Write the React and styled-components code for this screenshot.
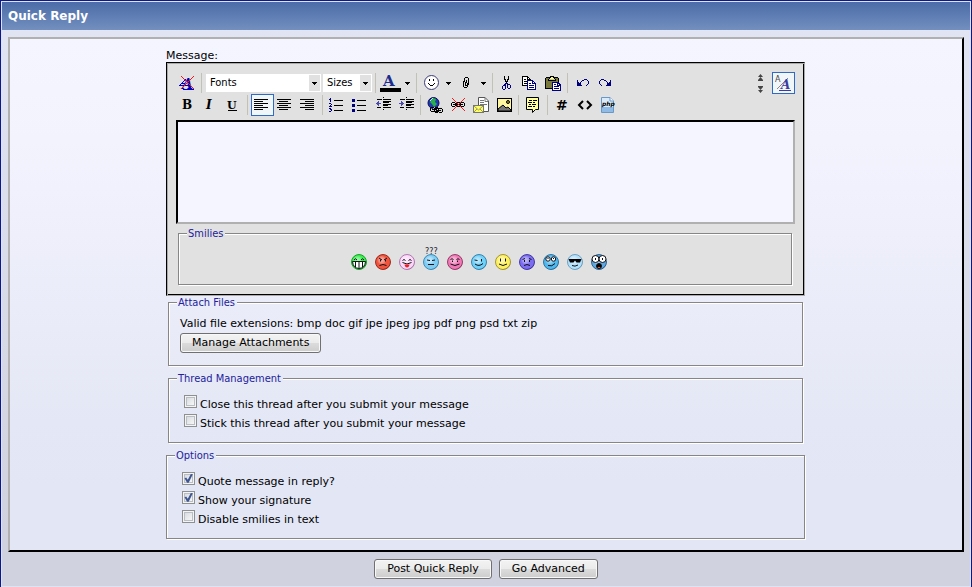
import React from "react";
import styled, { createGlobalStyle, css } from "styled-components";

const Global = createGlobalStyle`
  * { box-sizing: border-box; }
  body {
    margin: 0;
    font: 11px/14px Verdana, "DejaVu Sans", sans-serif;
    color: #000;
    background: #e1e4f2;
  }
`;

const Frame = styled.form`
  display: flex;
  flex-direction: column;
  min-height: 100vh;
  padding: 1px;
  border: 1px solid #0b198c;
  background: #dfe2f0;
`;
const Header = styled.h1`
  margin: 0;
  padding: 0 6px;
  font-size: 12px;
  line-height: 28px;
  font-weight: bold;
  color: #fff;
  background: linear-gradient(#4b6ca8, #738fbf);
`;
const Body = styled.main`
  flex: 1;
  padding: 7px 6px 0;
  background: linear-gradient(#e1e4f2, #d0d2e0 90%);
`;
const Panel = styled.div`
  padding: 10px;
  border: 2px solid;
  border-color: #b0b0b0 #000 #000 #b0b0b0;
  background: linear-gradient(#f5f5ff, #f3f3fe 20%, #e4e7f5 75%, #e2e6f5);
`;
const Column = styled.div`
  max-width: 640px;
  margin: 0 auto;
  display: flex;
  flex-direction: column;
`;
const MessageLabel = styled.label`
  line-height: 13px;
`;
const Editor = styled.section`
  margin-right: 1px;
  padding: 9px;
  background: #e1e1e1;
  border: 1px solid;
  border-color: #000 #aaa #aaa #000;
  box-shadow: inset 1px 1px #aaa, inset -1px -1px #000;
`;
const Toolbar = styled.div`
  display: flex;
  align-items: center;
  height: 22px;
`;
const Spacer = styled.span`
  flex: 1;
`;
const Separator = styled.span`
  width: 6px;
  height: 20px;
  display: flex;
  justify-content: center;
  &::before {
    content: "";
    width: 2px;
    border-left: 1px solid #c1c1b5;
  }
`;
const Tool = styled.button`
  display: flex;
  align-items: center;
  width: ${(p) => (p.$menu ? 35 : 23)}px;
  height: 22px;
  padding: 0 ${(p) => (p.$menu ? 0 : 3)}px;
  border: 1px solid transparent;
  background: none;
  ${(p) =>
    p.$active &&
    css`
      border-color: #316ac5;
      background: #f1f6f8;
    `}
`;
const Icon = styled.svg.attrs({ "aria-hidden": true })`
  flex: none;
  display: block;
  overflow: visible;
`;
const Picker = styled.span`
  display: grid;
  grid-template-columns: 1fr 12px;
  width: ${(p) => (p.$wide ? 115 : 49)}px;
  height: 18px;
  margin: 0 1px;
  border: 1px solid #fff;
  background: linear-gradient(#e1e1e1, #e1e1e1) right / 11px 100% no-repeat #fff;
`;
const Choice = styled.select`
  grid-area: 1 / 1 / 2 / 3;
  width: 100%;
  min-width: 0;
  padding: 0 3px;
  border: 0;
  appearance: none;
  background: none;
  font: 11px/16px Tahoma, "DejaVu Sans Condensed", "DejaVu Sans", sans-serif;
  color: #000;
`;
const PickerArrow = styled(Icon)`
  grid-area: 1 / 2;
  align-self: center;
  justify-self: center;
  pointer-events: none;
`;
const Resizer = styled.div`
  display: flex;
  flex-direction: column;
  gap: 5px;
  margin-right: 8px;
`;
const ResizeButton = styled.button`
  display: flex;
  padding: 0;
  border: 0;
  background: none;
`;
const Message = styled.textarea`
  display: block;
  width: 100%;
  height: 104px;
  margin: 4px 0 3px;
  padding: 4px;
  resize: none;
  border: 2px solid;
  border-color: #000 #b0b0b0 #b0b0b0 #000;
  background: #f5f5ff;
  font: inherit;
`;
const grooveLine = `url("data:image/svg+xml,${encodeURIComponent(
  '<svg xmlns="http://www.w3.org/2000/svg" width="7" height="7" shape-rendering="crispEdges" fill="none">' +
    '<rect x="1.5" y="1.5" width="5" height="5" stroke="#fff"/>' +
    '<rect x=".5" y=".5" width="5" height="5" stroke="#868686"/></svg>'
)}")`;
const Group = styled.fieldset`
  min-width: 0;
  margin: 0 ${(p) => (p.$inset ? 2 : 0)}px ${(p) => (p.$gap ? 5 : 0)}px;
  padding: 0 7px ${(p) => (p.$gap || p.$last ? 10 : 14)}px;
  border: 2px groove #fff;
  border-image: ${grooveLine} 2 stretch;
`;
const Legend = styled.legend`
  padding: 0 2px 0 1px;
  font: 11px/14px Tahoma, "DejaVu Sans Condensed", "DejaVu Sans", sans-serif;
  color: #22229c;
`;
const SmileyRow = styled.div`
  display: flex;
  justify-content: center;
  gap: 8px;
  padding: 13px 14px 0 0;
`;
const SmileyButton = styled.button`
  width: 16px;
  height: 16px;
  padding: 0;
  border: 0;
  background: none;
`;
const Attachments = styled.div`
  display: flex;
  flex-direction: column;
  align-items: flex-start;
  gap: 2px;
  padding: 7px 3px 2px;
`;
const PushButton = styled.button`
  height: 20px;
  padding: 0 ${(p) => (p.$wide ? 12 : 11)}px;
  border: 1px solid #707070;
  border-radius: 3px;
  background: linear-gradient(#f3f3f3, #ebebeb 50%, #dcdcdc 50%, #cdcdcd);
  box-shadow: inset 0 0 0 1px #f8f8f8;
  font: 11px/16px Verdana, "DejaVu Sans", sans-serif;
  color: #000;
`;
const Checks = styled.div`
  padding: 8px 7px 0;
`;
const CheckLabel = styled.label`
  display: flex;
  align-items: flex-start;
  gap: 3px;
  height: 19px;
  line-height: 21px;
`;
const CheckBox = styled.input`
  appearance: none;
  flex: none;
  width: 13px;
  height: 13px;
  margin: 1px 0 0;
  border: 1px solid #8e8f8f;
  box-shadow: inset 0 0 0 1px #f4f4f4, inset 0 0 0 2px #b9bec4;
  background: linear-gradient(135deg, #d0d4da, #f6f6f6 80%);
  display: grid;
  place-items: center;
  &:checked::before {
    content: "";
    width: 9px;
    height: 9px;
    background: #3f5592;
    clip-path: polygon(6% 48%, 24% 40%, 42% 64%, 76% 0, 98% 4%, 52% 98%, 34% 98%);
  }
`;
const Actions = styled.footer`
  display: flex;
  justify-content: center;
  gap: 7px;
  padding: 7px 0;
`;

const INK = {
  k: "#000", n: "#00007f", w: "#fff", y: "#ffff66", o: "#78783c", l: "#c0c0c0", p: "#4c4cac",
};

/* Draws a small bitmap icon: every character is one pixel, "." is clear. */
function Pixels({ rows, x = 0, y = 0 }) {
  const cells = [];
  rows.forEach((row, j) => {
    let i = 0;
    while (i < row.length) {
      let end = i + 1;
      while (row[end] === row[i]) end += 1;
      if (row[i] !== ".") {
        cells.push(
          <rect key={`${i}-${j}`} x={x + i} y={y + j} width={end - i} height="1" fill={INK[row[i]]} />
        );
      }
      i = end;
    }
  });
  return <g shapeRendering="crispEdges">{cells}</g>;
}

const Glyph = ({ width = 16, children }) => (
  <Icon width={width} height="16" viewBox={`0 0 ${width} 16`}>{children}</Icon>
);
const Bars = ({ list, color = "#000" }) => (
  <g fill={color} shapeRendering="crispEdges">
    {list.map(([x, y, w]) => <rect key={`${x}-${y}`} x={x} y={y} width={w} height="1" />)}
  </g>
);
const Letter = ({ x, y, size, fill = "#000", serif = true, ...rest }) => (
  <text
    x={x} y={y} fontSize={size} fill={fill} fontWeight="bold"
    fontFamily={serif ? '"DejaVu Serif", serif' : '"DejaVu Sans", sans-serif'} {...rest}
  />
);
const Down = ({ x, y = 7 }) => <Pixels x={x} y={y} rows={["kkkkk", ".kkk.", "..k.."]} />;

const RemoveFormat = () => (
  <Glyph>
    <Letter x="2" y="14" size="14" fill="#0000b4" fontStyle="italic">A</Letter>
    <path d="M-1 10.500H5M0 10L6 4M1 8.500H5M3 14.500H14" stroke="#0000d0" fill="none" />
    <path d="M1 1L14 14M14 1L1 14" stroke="#f01818" fill="none" />
  </Glyph>
);
const FontColor = () => (
  <Glyph width={35}>
    <Letter x="3" y="11" size="15" fill="#1c2c8c">A</Letter>
    <rect x="0" y="13" width="21" height="4" />
    <Down x={25} />
  </Glyph>
);
const SmileMenu = () => (
  <Glyph width={34}>
    <circle cx="10.500" cy="7.500" r="7" fill="#fff" stroke="#3c3c78" />
    <Pixels x={7} y={4} rows={[".k...k.", ".k...k.", ".......", ".......", "k.....k", ".k...k.", "..kkk.."]} />
    <Down x={25} />
  </Glyph>
);
const ClipMenu = () => (
  <Glyph width={34}>
    <Pixels x={7} y={2} rows={["..kkk..", ".k...k.", ".k...k.", ".k.k.k.", "kk.k.k.", "k.kk.k.", "k.k.kk.", "k.k.kk.", "k.kkk..", "k...k..", ".kkk..."]} />
    <Down x={25} />
  </Glyph>
);
const Cut = () => (
  <Glyph>
    <Pixels x={2} y={1} rows={["..k...k.", "..k...k.", "..k...k.", "..kk.kk.", "...k.k..", "...kkk..", "....k...", "...nnn..", "..nn.nnn", ".nnn.n..n", "n..n.n..n", "n..n.n..n", "n..n..nn.", ".nn......"]} />
  </Glyph>
);
const Copy = () => (
  <Glyph>
    <Pixels x={-1} y={1} rows={["kkkkkk..", "kwwwwkk.", "kwwwwkwk", "kwkkwkkkk", "kwwwwnnnnnn", "kwkkknwwwwnn", "kwwwwnwwwwnwn", "kwkkknwnnwnnnn", "kwwwwnwwwwwwwn", "kkkkknwnnnnnwn", ".....nwwwwwwwn", ".....nwnnnnnwn", ".....nwwwwwwwn", ".....nnnnnnnnn"]} />
  </Glyph>
);
const Paste = () => (
  <Glyph>
    <Pixels x={-1} y={1} rows={[".....kkkk", ".kkkkkyykkkkk", "koookyyyykoook", "kookllllllkook", "kookkkkkkkkook", "kooooooooooook", "koooooonnnnnnn", "koooooonwwwwnnn", "koooooonwnnwnwnn", "koooooonwwwwnnnn", "koooooonwnnnnnwn", "koooooonwwwwwwwn", "kkkkkkknwnnnnnwn", ".......nwwwwwwwn", ".......nnnnnnnnn"]} />
  </Glyph>
);
const arrow = [".......nnn..", "n....nn...n.", "n...n......n", "nn.n.......n", "nnnn.......n", "nnnn......n.", "nnnnn....n.."];
const Undo = () => <Glyph><Pixels x={2} y={4} rows={arrow} /></Glyph>;
const Redo = () => (
  <Glyph><Pixels x={1} y={4} rows={arrow.map((r) => [...r.padEnd(12, ".")].reverse().join(""))} /></Glyph>
);
const SwitchMode = () => (
  <Glyph>
    <Letter x="-1" y="7" size="8" fill="#444" serif={false} fontWeight="normal">A</Letter>
    <path d="M1 14L12 3" stroke="#888" />
    <Letter x="5" y="14" size="12" fill="#3c3ca0" fontStyle="italic">A</Letter>
    <path d="M3 15.500H15" stroke="#3c3ca0" />
  </Glyph>
);
const Align = ({ side }) => (
  <Glyph>
    <Bars list={[14, 9, 14, 9, 14, 9].map((w, i) => [
      side === "left" ? -1 : side === "right" ? 13 - w : w === 14 ? -1 : 1, 2 + i * 2, w,
    ])} />
  </Glyph>
);
const listBars = [[4, 3, 9], [4, 8, 9], [4, 13, 9]];
const Ordered = () => (
  <Glyph>
    <Pixels x={-1} y={1} rows={[".n", "nn", ".n", ".n", "", "nn.", "..n", ".n.", "nnn", "", "nn.", ".nn", "..n", "nn."]} />
    <Bars list={listBars} />
  </Glyph>
);
const Unordered = () => (
  <Glyph>
    <Pixels x={-1} y={2} rows={["nnn", "nnn", "nnn", "", "", "nnn", "nnn", "nnn", "", "", "nnn", "nnn", "nnn"]} />
    <Bars list={listBars} />
  </Glyph>
);
const Indent = ({ out }) => (
  <Glyph>
    <Bars list={[[1, 2, 5], [7, 2, 8], [7, 4, 8], [7, 5, 6], [7, 7, 8], [7, 8, 5], [1, 10, 4], [7, 10, 8], [7, 0, 1], [7, 12, 1]]} />
    <Pixels x={0} y={4} rows={out ? ["..p..", ".pp..", "ppppp", ".pp..", "..p.."] : ["..p..", "..pp.", "ppppp", "..pp.", "..p.."]} />
  </Glyph>
);
const Chain = ({ x, y }) => (
  <Pixels x={x} y={y} rows={[".kkk.kkk.", "k...k...k", "k.kkkkk.k", "k...k...k", ".kkk.kkk."]} />
);
const Link = () => (
  <Glyph>
    <circle cx="5.500" cy="6" r="5.500" fill="#2038b8" stroke="#101050" />
    <path d="M5 1L8 2L7 5L9 7L6 10L4 7L2 5Z" fill="#28b048" />
    <path d="M2 4L5 1" stroke="#c8e0ff" />
    <rect x="5" y="10" width="10" height="5" rx="2" fill="#d8d8d8" />
    <Chain x={2} y={10} /><Chain x={6} y={11} />
  </Glyph>
);
const Unlink = () => (
  <Glyph>
    <Chain x={0} y={5} /><Chain x={5} y={5} />
    <path d="M1 1L14 14M14 1L1 14" stroke="#f02020" />
  </Glyph>
);
const Email = () => (
  <Glyph>
    <path d="M4.500 .500H11L14.500 4V14.500H4.500Z" fill="#fff" stroke="#555" />
    <path d="M11 .500V4.500H14M6 3.500H10M6 5.500H10M6 7.500H13" stroke="#777" fill="none" />
    <rect x="-.500" y="8.500" width="10" height="7" fill="#ffff60" stroke="#776" />
    <path d="M0 9L4.500 13L9 9M0 15L3 12M9 15L6 12" stroke="#997" fill="none" />
  </Glyph>
);
const Picture = () => (
  <Glyph>
    <rect x=".500" y="1.500" width="14" height="13" fill="#fff6a0" stroke="#000" />
    <circle cx="11" cy="5" r="1.500" fill="#a09000" stroke="#000" />
    <path d="M1 14L1 12L6 8L9 11L11 10L14 13V14Z" fill="#777" stroke="#000" />
  </Glyph>
);
const Quote = () => (
  <Glyph>
    <path d="M.500 .500H12.500V12.500H9.500L6.500 15.500V12.500H.500Z" fill="#ffffa0" stroke="#000" />
    <Bars list={[[3, 3, 3], [7, 3, 4], [2, 5, 4], [7, 5, 2], [3, 7, 2], [6, 7, 4], [2, 9, 4], [7, 9, 2]]} />
  </Glyph>
);
const Code = () => (
  <Glyph><path d="M5 4L1 8L5 12M9 4L13 8L9 12" fill="none" stroke="#000" strokeWidth="2" /></Glyph>
);
const Php = () => (
  <Glyph>
    <path d="M.500 .500H9L12.500 4V15.500H.500Z" fill="#d9eafa" stroke="#6898c8" />
    <path d="M1 10H12V15H1Z" fill="#8fbbe6" />
    <path d="M9 .500V4H12.500" fill="#fff" stroke="#6898c8" />
    <Letter x="1" y="9" size="6" serif={false} fontStyle="italic">php</Letter>
  </Glyph>
);

const format = [
  [["Bold", <Glyph key="b"><Letter x="2" y="12" size="12">B</Letter></Glyph>],
    ["Italic", <Glyph key="i"><Letter x="3" y="12" size="12" fontStyle="italic">I</Letter></Glyph>],
    ["Underline", <Glyph key="u"><Letter x="1" y="12" size="11">U</Letter><Bars list={[[2, 13, 9]]} /></Glyph>]],
  [["Align Left", <Align key="l" side="left" />, true],
    ["Align Center", <Align key="c" side="center" />],
    ["Align Right", <Align key="r" side="right" />]],
  [["Ordered List", <Ordered key="o" />], ["Unordered List", <Unordered key="u" />],
    ["Decrease Indent", <Indent key="d" out />], ["Increase Indent", <Indent key="i" />]],
  [["Insert Link", <Link key="l" />], ["Remove Link", <Unlink key="u" />],
    ["Insert Email Link", <Email key="e" />], ["Insert Image", <Picture key="p" />]],
  [["Quote", <Quote key="q" />]],
  [["Code", <Glyph key="h"><Letter x="1" y="13" size="14" serif={false}>#</Letter></Glyph>],
    ["HTML", <Code key="c" />], ["PHP", <Php key="p" />]],
];

const smileys = [
  ["Big grin", "#35f04a", "#0b8a1c", (
    <><path d="M3 6Q4.500 3.500 6 6M10 6Q11.500 3.500 13 6" /><path d="M1.500 7.500H14.500Q14 14 8 14.500Q2 14 1.500 7.500Z" fill="#fff" /><path d="M4.500 8V13M8 8V14M11.500 8V13" /></>
  )],
  ["Mad", "#f0543c", "#8c1c10", (
    <path d="M4 4L7 6M12 4L9 6M5.500 5.500V7.500M10.500 5.500V7.500M4.500 11.500Q8 9.500 11.500 11.500" />
  )],
  ["Tongue", "#fbd8f8", "#a060a0", (
    <><path d="M3.500 6.500Q5 4.500 6.500 6.500M9.500 6.500Q11 4.500 12.500 6.500M3.500 8.500Q8 11.500 12.500 8.500" /><path d="M5.500 10.500H10.500Q10 13.500 8 13.500Q6 13.500 5.500 10.500Z" fill="#f02020" stroke="none" /></>
  )],
  ["Confused", "#80cdf4", "#2878a8", (
    <><path d="M4 6L7 6.500M9 6.500L12 6M5 10.500H11" /><text x="2" y="0" fontSize="8" stroke="none" fill="#223" fontFamily="DejaVu Sans, sans-serif">???</text></>
  )],
  ["Embarrassed", "#f078b4", "#802858", (
    <path d="M3.500 5.500Q5 4 6.500 5.500M9.500 5.500Q11 4 12.500 5.500M3.500 10Q8 13 12.500 10M5.500 6.500V8M10.500 6.500V8" />
  )],
  ["Wink", "#70d0f8", "#2070a0", (
    <path d="M3.500 6L6.500 6.500M10.500 5V7.500M4 10Q8 13 12 9.500" />
  )],
  ["Smile", "#fcf060", "#908020", (
    <path d="M5.500 4.500V7.500M10.500 4.500V7.500M4 10Q8 13 12 10" />
  )],
  ["Frown", "#7c6cf0", "#302890", (
    <path d="M3.500 5.500L6 4.500M12.500 5.500L10 4.500M5.500 6V8M10.500 6V8M5 11.500Q8 9.500 11 11.500" />
  )],
  ["Roll eyes", "#50b8ec", "#1c6090", (
    <><circle cx="5" cy="5" r="2.200" fill="#fff" /><circle cx="10.500" cy="5" r="2.200" fill="#fff" /><path d="M5 4V5M10.500 4V5M5 11.500Q9 13 12 9.500" /></>
  )],
  ["Cool", "#b4e0fa", "#5890b8", (
    <><path d="M1.500 5H14.500L13 8.500H9.500L8 6.500L6.500 8.500H3Z" fill="#000" stroke="none" /><path d="M5 11.500Q8 13 11 11" /></>
  )],
  ["Shocked", "#60a8e0", "#1c5080", (
    <><circle cx="4.500" cy="5" r="3.500" fill="#fff" /><circle cx="11.500" cy="5" r="3.500" fill="#fff" /><path d="M4.500 4V6M11.500 4V6" /><ellipse cx="8" cy="12" rx="2.500" ry="2.500" fill="#000" /><path d="M6.500 14Q8 11.500 9.500 14Z" fill="#f06020" stroke="none" /></>
  )],
];

function Smiley({ index, color, rim, children }) {
  return (
    <Icon width="16" height="16" viewBox="0 0 16 16">
      <defs>
        <radialGradient id={`face${index}`} cx="42%" cy="38%" r="70%">
          <stop offset="0" stopColor="#fff" stopOpacity=".5" />
          <stop offset=".45" stopColor={color} />
          <stop offset=".8" stopColor={color} />
          <stop offset="1" stopColor={rim} />
        </radialGradient>
      </defs>
      <circle cx="8" cy="8" r="7.500" fill={color} />
      <circle cx="8" cy="8" r="7.500" fill={`url(#face${index})`} stroke={rim} strokeWidth=".800" />
      <g fill="none" stroke="#101018">{children}</g>
    </Icon>
  );
}

function PickList({ label, wide }) {
  return (
    <Picker $wide={wide}>
      <Choice aria-label={label}><option>{label}</option></Choice>
      <PickerArrow width="5" height="3" viewBox="0 0 5 3"><Down x={0} y={0} /></PickerArrow>
    </Picker>
  );
}

function Check({ children, checked }) {
  return <CheckLabel><CheckBox type="checkbox" defaultChecked={checked} />{children}</CheckLabel>;
}

export default function App() {
  const tool = (label, icon, props) => (
    <Tool type="button" key={label} aria-label={label} {...props}>{icon}</Tool>
  );
  return (
    <>
      <Global />
      <Frame onSubmit={(e) => e.preventDefault()}>
        <Header>Quick Reply</Header>
        <Body>
          <Panel>
            <Column>
              <MessageLabel htmlFor="message">Message:</MessageLabel>
              <Editor>
                <Toolbar>
                  {tool("Remove Text Formatting", <RemoveFormat />)}
                  <Separator />
                  <PickList label="Fonts" wide />
                  <PickList label="Sizes" />
                  <Separator />
                  {tool("Text Color", <FontColor />, { $menu: true })}
                  <Separator />
                  {tool("Smilies", <SmileMenu />, { $menu: true })}
                  {tool("Attachments", <ClipMenu />, { $menu: true })}
                  <Separator />
                  {tool("Cut", <Cut />)}
                  {tool("Copy", <Copy />)}
                  {tool("Paste", <Paste />)}
                  <Separator />
                  {tool("Undo", <Undo />)}
                  {tool("Redo", <Redo />)}
                  <Spacer />
                  <Resizer>
                    <ResizeButton type="button" aria-label="Decrease Size">
                      <Icon width="7" height="7" viewBox="0 0 7 7"><path d="M3.500 0L6 3H1ZM3.500 3L6 6H1ZM1 6H6V7H1Z" fill="#444" /></Icon>
                    </ResizeButton>
                    <ResizeButton type="button" aria-label="Increase Size">
                      <Icon width="7" height="7" viewBox="0 0 7 7"><path d="M3.500 7L6 4H1ZM3.500 4L6 1H1ZM1 0H6V1H1Z" fill="#444" /></Icon>
                    </ResizeButton>
                  </Resizer>
                  {tool("Switch Editor Mode", <SwitchMode />, { $active: true })}
                </Toolbar>
                <Toolbar>
                  {format.map((group, i) => (
                    <React.Fragment key={group[0][0]}>
                      {i > 0 && <Separator />}
                      {group.map(([label, icon, active]) => tool(label, icon, { $active: active }))}
                    </React.Fragment>
                  ))}
                </Toolbar>
                <Message id="message" />
                <Group $inset>
                  <Legend>Smilies</Legend>
                  <SmileyRow>
                    {smileys.map(([name, color, rim, face], i) => (
                      <SmileyButton type="button" key={name} aria-label={name}>
                        <Smiley index={i} color={color} rim={rim}>{face}</Smiley>
                      </SmileyButton>
                    ))}
                  </SmileyRow>
                </Group>
              </Editor>
              <Group $inset $gap>
                <Legend>Attach Files</Legend>
                <Attachments>
                  <span>Valid file extensions: bmp doc gif jpe jpeg jpg pdf png psd txt zip</span>
                  <PushButton type="button">Manage Attachments</PushButton>
                </Attachments>
              </Group>
              <Group $inset $gap>
                <Legend>Thread Management</Legend>
                <Checks>
                  <Check>Close this thread after you submit your message</Check>
                  <Check>Stick this thread after you submit your message</Check>
                </Checks>
              </Group>
              <Group $last>
                <Legend>Options</Legend>
                <Checks>
                  <Check checked>Quote message in reply?</Check>
                  <Check checked>Show your signature</Check>
                  <Check>Disable smilies in text</Check>
                </Checks>
              </Group>
            </Column>
          </Panel>
          <Actions>
            <PushButton type="submit" $wide>Post Quick Reply</PushButton>
            <PushButton type="button" $wide>Go Advanced</PushButton>
          </Actions>
        </Body>
      </Frame>
    </>
  );
}
